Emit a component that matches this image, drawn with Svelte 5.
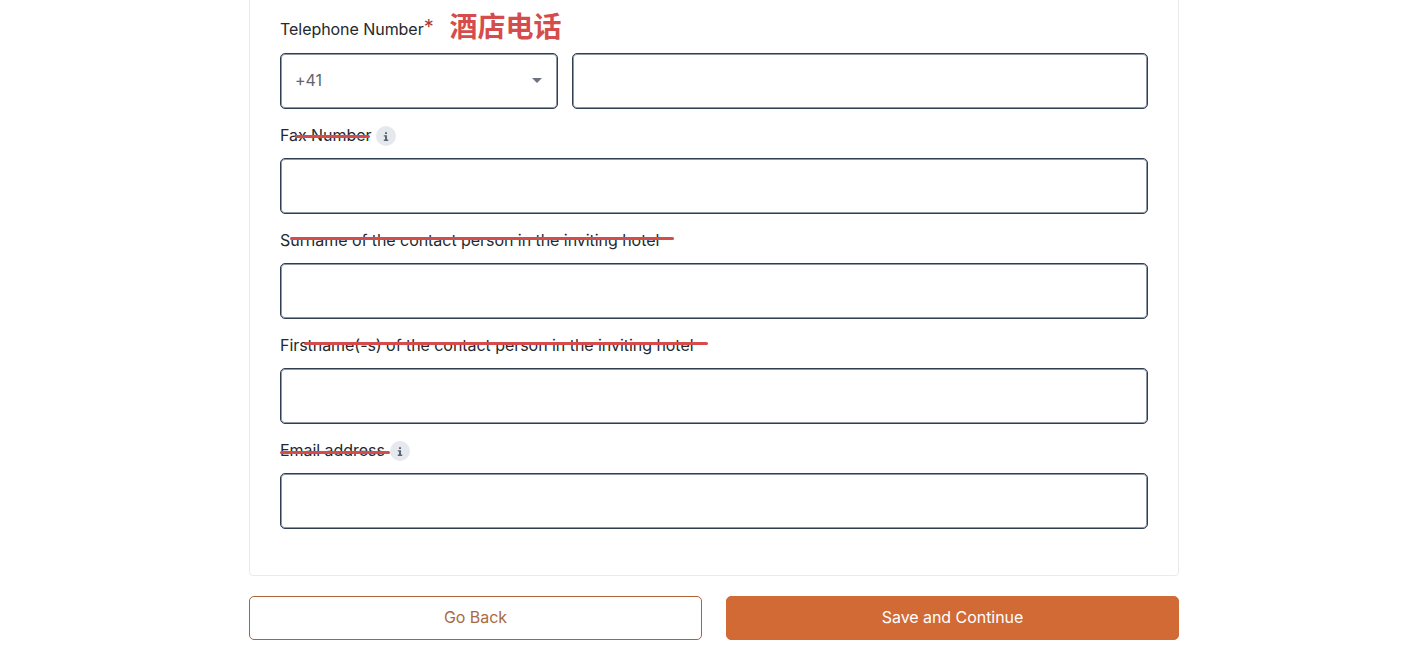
<script>
  // red strokes are hand annotations lying over the labels
  const fields = [
    { label: 'Fax Number', info: true, strike: { left: 15, width: 75, top: 13 } },
    { label: 'Surname of the contact person in the inviting hotel', strike: { left: 10, width: 384, top: 10 } },
    { label: 'Firstname(-s) of the contact person in the inviting hotel', strike: { left: 24, width: 404, top: 10 } },
    { label: 'Email address', info: true, strike: { left: 0, width: 110, top: 14 } }
  ];
</script>

<div class="page">
  <div class="card">
    <div class="field">
      <div class="label">
        Telephone Number<span class="req">*</span>
        <span class="note">酒店电话</span>
      </div>
      <div class="phone">
        <div class="box select">
          <span>+41</span>
          <svg width="10" height="5" viewBox="0 0 10 5"><path d="M0 0h10L5 5z" fill="#6b7280" /></svg>
        </div>
        <div class="box grow"></div>
      </div>
    </div>

    {#each fields as f}
      <div class="field">
        <div class="label low">
          {f.label}
          {#if f.info}
            <span class="info">
              <svg width="6" height="9" viewBox="0 0 6 9">
                <path d="M2 0.3h2v1.7H2zM0.8 3.2H4v4.3h1.2V9H0.8V7.5H2V4.6H0.8z" fill="#5b6675" />
              </svg>
            </span>
          {/if}
          <span class="strike" style="left:{f.strike.left}px;width:{f.strike.width}px;top:{f.strike.top}px"></span>
        </div>
        <div class="box"></div>
      </div>
    {/each}
  </div>

  <div class="actions">
    <button class="back">Go Back</button>
    <button class="save">Save and Continue</button>
  </div>
</div>

<style>
  :global(body) {
    background: #fff;
    overflow: hidden;
  }

  .page {
    width: 930px;
    margin: -10px auto 0 249px;
    font-family: Inter, "Noto Sans CJK SC", sans-serif;
    color: #25282e;
    letter-spacing: -0.05px;
  }

  .card {
    display: flex;
    flex-direction: column;
    gap: 13px;
    border: 1px solid #e8eaed;
    border-radius: 4px;
    padding: 26px 30px 46px;
  }

  .label {
    position: relative;
    display: flex;
    align-items: center;
    gap: 5px;
    height: 24px;
    margin-bottom: 12px;
    font-size: 16px;
  }

  .low {
    box-sizing: border-box;
    padding-top: 2px;
  }

  .req {
    margin-left: -5px;
    color: #a83a3a;
    font-size: 20px;
    line-height: 20px;
    align-self: flex-start;
  }

  .note {
    margin-left: 11px;
    margin-top: -8px;
    color: #d64c4c;
    font-size: 28px;
    font-weight: 700;
    line-height: 24px;
    letter-spacing: 0;
    font-family: "Noto Sans CJK SC", sans-serif;
  }

  .info {
    display: flex;
    align-items: center;
    justify-content: center;
    width: 20px;
    height: 20px;
    margin-top: 2px;
    border-radius: 50%;
    background: #e5e8ed;
  }

  .strike {
    position: absolute;
    height: 3px;
    border-radius: 2px;
    background: #d64c4c;
  }

  .box {
    height: 56px;
    box-sizing: border-box;
    border: 1px solid #2f3e50;
    border-radius: 5px;
    background: #fff;
    box-shadow: inset 0 0 0 1px #8f99a5;
  }

  .phone {
    display: flex;
    gap: 14px;
  }

  .select {
    display: flex;
    align-items: center;
    justify-content: space-between;
    width: 278px;
    padding: 0 15px 2px 14px;
    font-size: 16px;
    color: #5f6670;
  }

  .grow {
    flex: 1;
  }

  .actions {
    display: flex;
    gap: 24px;
    margin-top: 20px;
  }

  button {
    flex: 1;
    height: 44px;
    padding: 0 0 2px;
    border-radius: 5px;
    font-family: inherit;
    font-size: 16px;
    letter-spacing: inherit;
  }

  .back {
    background: #fff;
    border: 1px solid #a9643a;
    color: #a86a45;
  }

  .save {
    background: #d16a35;
    border: 1px solid #d16a35;
    color: #fff;
  }
</style>
